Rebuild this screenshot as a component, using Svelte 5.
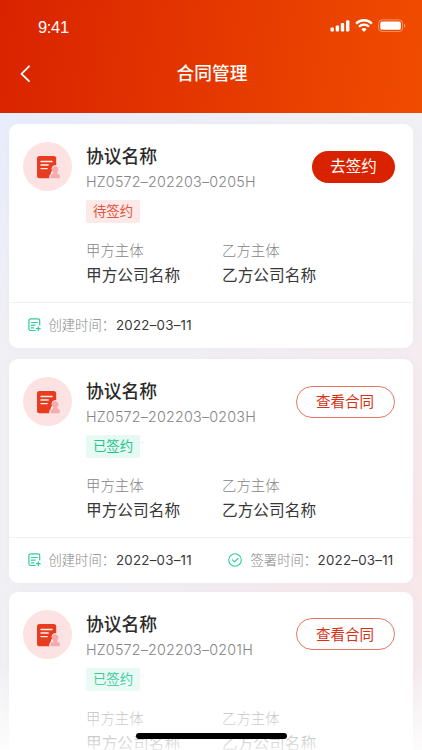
<script>
  const cards = [
    { id: 'HZ0572–202203–0205H', signed: false, created: '2022–03–11', action: '去签约' },
    { id: 'HZ0572–202203–0203H', signed: true, created: '2022–03–11', signedAt: '2022–03–11', action: '查看合同' },
    { id: 'HZ0572–202203–0201H', signed: true, action: '查看合同' }
  ];
</script>

<div class="screen">
  <header>
    <div class="status">
      <span class="time">9:41</span>
      <svg width="76" height="16" viewBox="0 0 76 16" fill="#fff">
        <rect x="0.5" y="9.6" width="3.4" height="4" rx="1" />
        <rect x="5.7" y="7.6" width="3.4" height="6" rx="1" />
        <rect x="10.8" y="5" width="3.4" height="8.6" rx="1" />
        <rect x="16" y="2.2" width="3.4" height="11.4" rx="1" />
        <g fill="none" stroke="#fff" stroke-width="2.3">
          <path d="M26.1 5.6a11 11 0 0 1 15.8 0" />
          <path d="M29 8.8a7 7 0 0 1 10 0" />
        </g>
        <path d="M31.4 11.3a3.8 3.8 0 0 1 5.2 0L34 13.9z" />
        <rect x="48.6" y="1.9" width="24" height="11.6" rx="3.4" fill="none" stroke="#fff" stroke-opacity=".4" />
        <rect x="50.3" y="3.6" width="20.6" height="8.2" rx="1.9" />
        <path d="M74 5.8v3.9c1.9-.8 1.9-3.1 0-3.9z" opacity=".45" />
      </svg>
    </div>
    <div class="nav">
      <svg class="back" width="12" height="18" viewBox="0 0 12 18" fill="none" stroke="#fff" stroke-width="1.8" stroke-linecap="round" stroke-linejoin="round">
        <path d="M10 1.3L2.5 8.8l7.5 7.3" />
      </svg>
      <h1>合同管理</h1>
    </div>
  </header>

  <main>
    {#each cards as card}
      <article>
        <div class="body">
          <div class="avatar">
            <svg width="25" height="24" viewBox="0 0 25 24">
              <path d="M2.5 0h14.2A2.5 2.5 0 0 1 19.2 2.5V9c-3.6-.1-5.4 3-4.1 5.7-1.6 1-.8 2.6-1.7 3.5-1 .8-1.2 2-1.2 4.1H2.5A2.5 2.5 0 0 1 0 19.8V2.5A2.5 2.5 0 0 1 2.5 0z" fill="#e73c20" />
              <path d="M4 5.5h11M4 9h7.2M4 12.6h6.2" stroke="#fff0ed" stroke-width="1.4" stroke-linecap="round" />
              <path d="M18.2 10.2a3.3 3.3 0 0 1 2.1 5.8c-.3 1.2.2 2.1 1 2.4h1.4v3.9h-9v-3.9h1.4c.8-.3 1.3-1.2 1-2.4a3.3 3.3 0 0 1 2.1-5.8z" fill="#f5aaae" />
            </svg>
          </div>
          <div class="info">
            <h2>协议名称</h2>
            <div class="number">{card.id}</div>
            <span class="tag" class:done={card.signed}>{card.signed ? '已签约' : '待签约'}</span>
            <div class="parties">
              <div><div class="label">甲方主体</div><div class="value">甲方公司名称</div></div>
              <div><div class="label">乙方主体</div><div class="value">乙方公司名称</div></div>
            </div>
          </div>
          <button class:outline={card.signed}>{card.action}</button>
        </div>
        {#if card.created}
          <footer>
            <div class="stamp">
              <svg width="14" height="14" viewBox="0 0 14 14" fill="none" stroke="#2dcc9f" stroke-width="1.2" stroke-linecap="round">
                <path d="M11.7 7V2.6a1.7 1.7 0 0 0-1.7-1.7H2.6A1.7 1.7 0 0 0 .9 2.6v8.2a1.7 1.7 0 0 0 1.7 1.7h4.6" />
                <path d="M3.3 4.5h6M3.3 7.2h3.8M3.3 9.8h2.4M10.3 8.8v3.8M8.4 10.7h3.8" />
              </svg>
              <span class="caption">创建时间：</span><span class="date">{card.created}</span>
            </div>
            {#if card.signedAt}
              <div class="stamp">
                <svg width="14" height="14" viewBox="0 0 14 14" fill="none" stroke="#2dcc9f" stroke-width="1.1" stroke-linecap="round" stroke-linejoin="round">
                  <circle cx="7" cy="7" r="6.3" />
                  <path d="M4.4 6.9l2.1 2 3.5-3.4" />
                </svg>
                <span class="caption">签署时间：</span><span class="date">{card.signedAt}</span>
              </div>
            {/if}
          </footer>
        {/if}
      </article>
    {/each}
  </main>
  <div class="fade"></div>
  <div class="home"></div>
</div>

<style>
  .screen {
    position: relative;
    box-sizing: border-box;
    width: 422px;
    height: 750px;
    overflow: hidden;
    font-family: Inter, 'Noto Sans CJK SC', sans-serif;
    background:
      radial-gradient(ellipse 330px 300px at 450px 540px, #fae6e8 0%, rgba(250, 230, 232, 0) 100%),
      radial-gradient(ellipse 330px 240px at 0 110px, #e8edfc 0%, rgba(232, 237, 252, 0) 100%),
      #f1f0f4;
  }
  header {
    box-sizing: border-box;
    height: 112.5px;
    padding-top: 18px;
    color: #fff;
    background: linear-gradient(97deg, #d92300 0%, #f04c00 100%);
  }
  .status {
    display: flex;
    justify-content: space-between;
    height: 32px;
    padding: 0 16px 0 38px;
  }
  .time {
    font-family: 'Liberation Sans', sans-serif;
    font-size: 16.5px;
    line-height: 19px;
    letter-spacing: -.35px;
  }
  .nav {
    display: grid;
    grid-template-columns: 60px 1fr 58px;
    align-items: center;
    height: 47px;
  }
  .back { margin-left: 19px; }
  h1 {
    margin: 0;
    font-size: 17.7px;
    font-weight: 500;
    line-height: 26px;
    text-align: center;
  }
  main {
    display: flex;
    flex-direction: column;
    gap: 9px;
    padding: 11.5px 9px 0;
  }
  article {
    flex: none;
    box-sizing: border-box;
    width: 404px;
    height: 223.5px;
    border-radius: 9px;
    background: #fff;
    box-shadow: 0 0 9px rgba(200, 200, 220, .12);
  }
  article:first-child { margin-bottom: 2.5px; }
  .body {
    display: flex;
    box-sizing: border-box;
    height: 178px;
    padding: 18px 18px 0 14px;
  }
  .avatar {
    display: flex;
    flex: none;
    box-sizing: border-box;
    width: 49px;
    height: 49px;
    padding: 14px 0 0 14px;
    border-radius: 50%;
    background: #fce2e2;
  }
  .info {
    flex: 1;
    width: 0;
    margin-left: 14px;
  }
  h2 {
    margin: 0;
    padding-top: 1px;
    color: #2b2b2b;
    font-size: 17.8px;
    font-weight: 500;
    line-height: 28px;
  }
  .number {
    margin-top: -1px;
    color: #858585;
    font-size: 14.3px;
    font-weight: 300;
    line-height: 23px;
    letter-spacing: .2px;
    white-space: nowrap;
  }
  .tag {
    display: block;
    width: 54px;
    height: 23px;
    margin-top: 7px;
    border-radius: 2px;
    color: #e5533a;
    background: #fde9e7;
    font-size: 13.4px;
    line-height: 22px;
    text-align: center;
  }
  .tag.done {
    color: #1fc58f;
    background: #e6f9f3;
  }
  .parties {
    display: grid;
    grid-template-columns: 136px 136px;
    margin-top: 17px;
  }
  .label {
    color: #858585;
    font-size: 14.4px;
    font-weight: 300;
    line-height: 22px;
  }
  .value {
    margin-top: 1px;
    color: #383838;
    font-size: 15.7px;
    line-height: 26px;
    white-space: nowrap;
  }
  button {
    flex: none;
    box-sizing: border-box;
    width: 83px;
    height: 32px;
    margin-top: 8.5px;
    padding: 0;
    border: 0;
    border-radius: 16px;
    color: #fff;
    background: #d92300;
    font-family: inherit;
    font-size: 15.5px;
    line-height: 32px;
  }
  button.outline {
    width: 99px;
    margin-left: -99px;
    padding-right: 1px;
    border: 1px solid #e47865;
    color: #d92f12;
    background: #fff;
    font-size: 14.5px;
    line-height: 29px;
  }
  footer {
    display: flex;
    justify-content: space-between;
    box-sizing: border-box;
    height: 45px;
    padding: 0 19.5px 0 18.5px;
    border-top: 1px solid #f1f1f3;
  }
  .stamp {
    display: flex;
    align-items: center;
    height: 44px;
    font-size: 13.3px;
  }
  .caption {
    width: 67.5px;
    margin: -1px 0 0 7px;
    color: #858585;
    font-weight: 300;
    white-space: nowrap;
  }
  .stamp + .stamp .caption {
    width: 67px;
    margin-left: 9px;
  }
  .date {
    color: #383838;
    letter-spacing: .25px;
    white-space: nowrap;
  }
  .fade {
    position: absolute;
    inset: 665px 0 0;
    background: linear-gradient(rgba(255, 255, 255, 0), rgba(255, 255, 255, .88));
  }
  .home {
    position: absolute;
    left: 136px;
    top: 733px;
    width: 151px;
    height: 6px;
    border-radius: 3px;
    background: #000;
  }
</style>
